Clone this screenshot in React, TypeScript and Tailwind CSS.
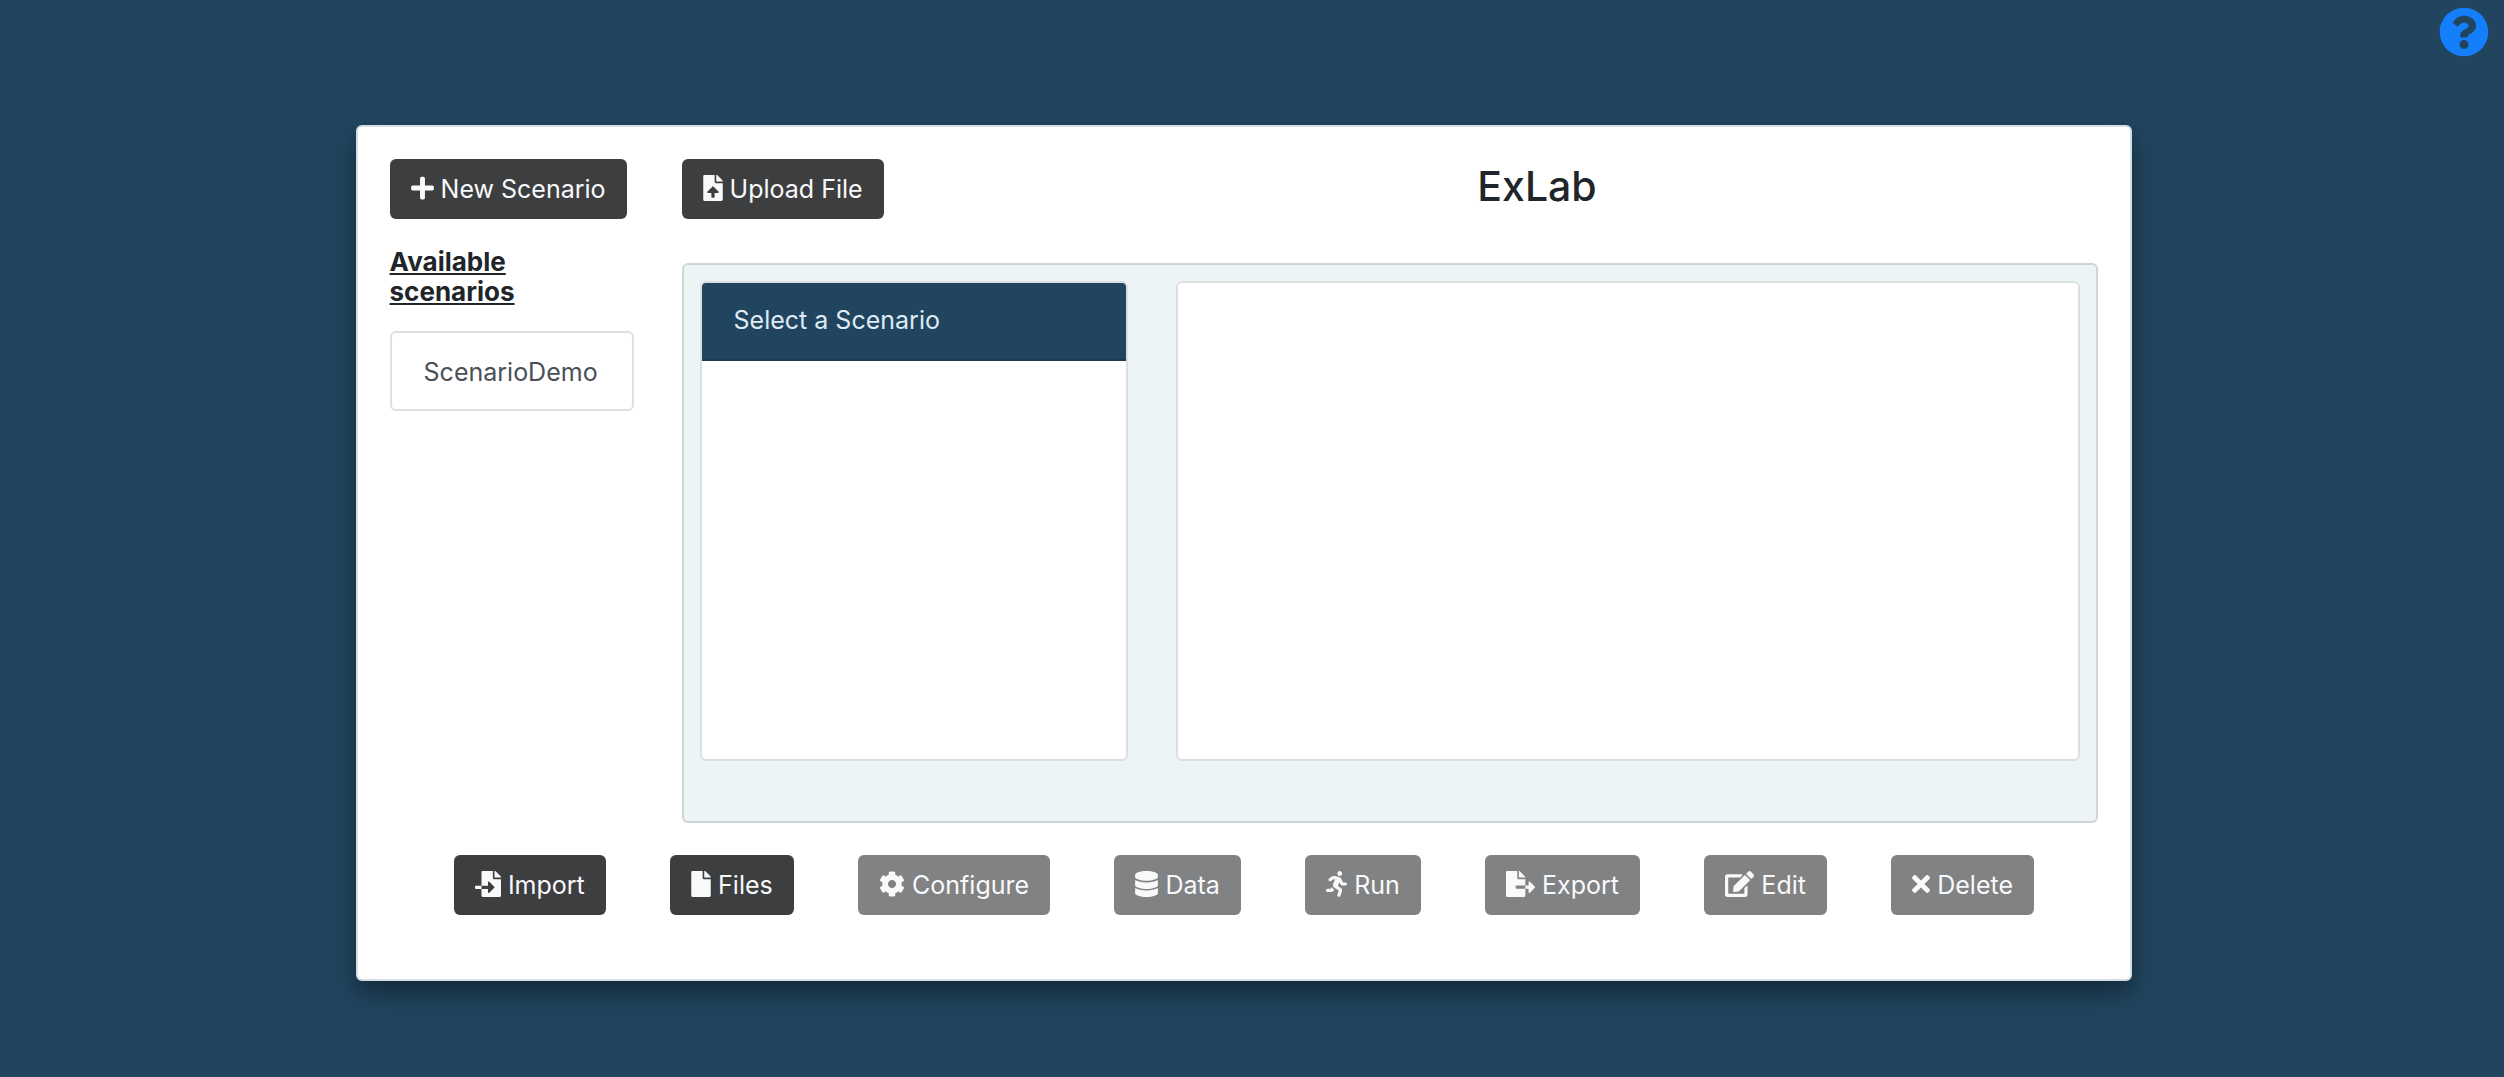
import React from "react";
import {
  FaCog,
  FaDatabase,
  FaEdit,
  FaFile,
  FaFileExport,
  FaFileImport,
  FaFileUpload,
  FaPlus,
  FaQuestionCircle,
  FaRunning,
  FaTimes,
} from "react-icons/fa";
import type { IconType } from "react-icons";

type ActionButtonProps = {
  icon: IconType;
  iconWidth: string;
  label: string;
  disabled?: boolean;
};

function ActionButton({ icon: Icon, iconWidth, label, disabled }: ActionButtonProps) {
  return (
    <button
      type="button"
      disabled={disabled}
      className="flex h-[60px] shrink-0 items-center gap-[7px] whitespace-nowrap rounded-md bg-[#3d3e40] px-[21px] text-[25px] leading-[38px] text-[#f8f9fa] disabled:bg-[#818284]"
    >
      <Icon className={`mb-0.5 h-[26px] shrink-0 ${iconWidth}`} aria-hidden="true" />
      {label}
    </button>
  );
}

const actions: ActionButtonProps[] = [
  { icon: FaFileImport, iconWidth: "w-[26px]", label: "Import" },
  { icon: FaFile, iconWidth: "w-[20px]", label: "Files" },
  { icon: FaCog, iconWidth: "w-[26px]", label: "Configure", disabled: true },
  { icon: FaDatabase, iconWidth: "w-[23px]", label: "Data", disabled: true },
  { icon: FaRunning, iconWidth: "w-[21px]", label: "Run", disabled: true },
  { icon: FaFileExport, iconWidth: "w-[29px]", label: "Export", disabled: true },
  { icon: FaEdit, iconWidth: "w-[29px]", label: "Edit", disabled: true },
  { icon: FaTimes, iconWidth: "w-[18px]", label: "Delete", disabled: true },
];

export default function App() {
  return (
    <div className="relative min-h-screen bg-[#21455f] px-[14.2%] pt-[125px] pb-24 font-[Inter,sans-serif] text-[25px] text-[#212529]">
      <button type="button" aria-label="Help" className="absolute top-[7px] right-[15px] text-[#147efb]">
        <FaQuestionCircle className="size-[50px]" />
      </button>

      <main className="mr-4 rounded-md border-2 border-[#d6dfe5] bg-white px-8 pt-8 pb-16 shadow-[0_12px_24px_rgba(0,0,0,0.4)]">
        <div className="flex gap-12">
          <aside className="flex w-[244px] shrink-0 flex-col items-start">
            <ActionButton icon={FaPlus} iconWidth="w-[23px]" label="New Scenario" />
            <h2 className="mt-7 w-[160px] text-[26px] leading-[30px] font-bold underline">Available scenarios</h2>
            <button
              type="button"
              className="mt-6 h-20 w-full rounded-md border-2 border-[#dfdfdf] px-8 pt-1 text-left text-[#495057]"
            >
              ScenarioDemo
            </button>
          </aside>

          <section className="min-w-0 flex-1">
            <header className="flex h-[104px] items-start">
              <ActionButton icon={FaFileUpload} iconWidth="w-[20px]" label="Upload File" />
              <h1 className="ml-[92px] flex-1 text-center text-[41px] leading-[54px] font-medium">ExLab</h1>
            </header>
            <div className="flex gap-12 rounded-md border-2 border-[#ced4da] bg-[#ecf4f6] px-4 pt-4 pb-15">
              <div className="h-[480px] w-[31%] overflow-hidden rounded-md border-2 border-[#dcdfe1] bg-white">
                <h2 className="h-[78px] border-b-2 border-[#1f3b50] bg-[#21455f] px-8 leading-[74px] text-[#dfeaf5]">
                  Select a Scenario
                </h2>
              </div>
              <div className="h-[480px] flex-1 rounded-md border-2 border-[#dcdfe1] bg-white" />
            </div>
          </section>
        </div>

        <div className="mt-8 flex justify-evenly">
          {actions.map((action) => (
            <ActionButton key={action.label} {...action} />
          ))}
        </div>
      </main>
    </div>
  );
}
